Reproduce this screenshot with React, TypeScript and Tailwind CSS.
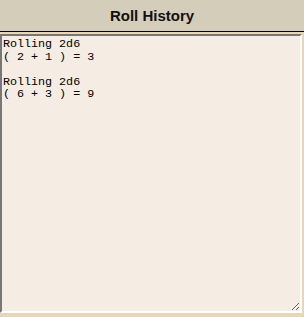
import React from 'react';

const rolls = [
  { dice: '2d6', parts: [2, 1] },
  { dice: '2d6', parts: [6, 3] },
];

// Build the log text the same way the history panel prints it
const historyText = rolls
  .map(r => `Rolling ${r.dice}\n( ${r.parts.join(' + ')} ) = ${r.parts.reduce((a, b) => a + b, 0)}`)
  .join('\n\n');

export default function App() {
  return (
    <div className="w-[304px] h-[317px] bg-[#e8d6b4] flex flex-col overflow-hidden">
      <div className="h-[32px] shrink-0 bg-[#d4cdba] border-b border-black flex items-center justify-center">
        <h2
          className="text-[15px] font-bold text-[#111] leading-none"
          style={{ fontFamily: '"Liberation Sans", Arial, sans-serif' }}
        >
          Roll History
        </h2>
      </div>
      <textarea
        readOnly
        value={historyText}
        className="mt-[2px] w-[302px] h-[279px] bg-[#f5ece4] text-black text-[11.7px] leading-[12.6px] px-[1px] py-[2px] border-2 border-t-[#777] border-l-[#777] border-b-white border-r-white outline-none"
        style={{ fontFamily: '"Liberation Mono", "Courier New", monospace' }}
      />
    </div>
  );
}
